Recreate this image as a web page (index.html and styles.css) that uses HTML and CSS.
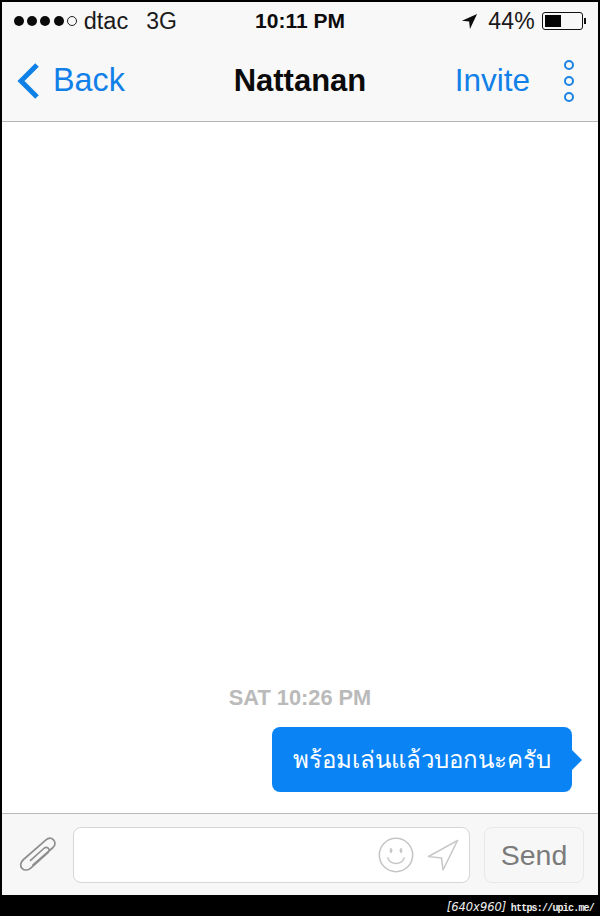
FILE: index.html
```html
<!DOCTYPE html>
<html lang="th">
<head>
<meta charset="utf-8">
<title>Nattanan</title>
<link rel="stylesheet" href="styles.css">
</head>
<body>
<div class="phone">
  <header class="top">
    <div class="status">
      <div class="status-left">
        <span class="signal"><i class="dot"></i><i class="dot"></i><i class="dot"></i><i class="dot"></i><i class="dot empty"></i></span>
        <span class="carrier">dtac</span>
        <span class="net">3G</span>
      </div>
      <div class="clock">10:11 PM</div>
      <div class="status-right">
        <svg class="loc" width="17" height="17" viewBox="0 0 18 18"><path d="M17 1 1 8.2l7.6.9.9 7.9z" fill="#0c0c0c"/></svg>
        <span class="pct">44%</span>
        <span class="battery"><span class="level"></span></span><span class="nub"></span>
      </div>
    </div>
    <nav class="nav">
      <a class="back">
        <svg width="26" height="38" viewBox="0 0 26 38"><path d="M23 3 7 19l16 16" fill="none" stroke="#0f80e6" stroke-width="5"/></svg>
        <span>Back</span>
      </a>
      <h1 class="title">Nattanan</h1>
      <a class="invite">Invite</a>
      <svg class="more" width="14" height="44" viewBox="0 0 14 44"><g fill="none" stroke="#1a84e2" stroke-width="2"><circle cx="7" cy="6" r="4"/><circle cx="7" cy="22" r="4"/><circle cx="7" cy="38" r="4"/></g></svg>
    </nav>
  </header>
  <main class="thread">
    <div class="stamp">SAT 10:26 PM</div>
    <div class="bubble">พร้อมเล่นแล้วบอกนะครับ</div>
  </main>
  <footer class="composer">
    <svg class="clip" width="42" height="40" viewBox="0 0 42 40"><path d="M16.500 30.500 37 12.500c2.800-2.600 2.300-5.800.5-7.600-2-2-5-2.200-7.500 0L7.500 24.500c-3.300 3-3.700 6.500-1.500 8.800 2.300 2.500 6 2.200 9-.5l17-15.300c1.600-1.500 1.400-3.300.2-4.300-1.200-1.100-3-1-4.400.3L14 25.800" fill="none" stroke="#8e8e8e" stroke-width="1.700"/></svg>
    <div class="field">
      <svg width="36" height="36" viewBox="0 0 36 36"><g fill="none" stroke="#c6c6c6" stroke-width="1.600"><circle cx="18" cy="18" r="16.700"/><path d="M9.500 20.500c2 4.500 5.300 6 8.500 6s6.500-1.500 8.500-6"/></g><ellipse cx="13" cy="13.500" rx="1.400" ry="2.600" fill="#c6c6c6"/><ellipse cx="23" cy="13.500" rx="1.400" ry="2.600" fill="#c6c6c6"/></svg>
      <svg width="32" height="32" viewBox="0 0 32 32"><path d="M30.500 1.500 1.500 17.500l13 1.500 1.500 12z" fill="none" stroke="#c9c9c9" stroke-width="1.600" stroke-linejoin="round"/></svg>
    </div>
    <div class="send">Send</div>
  </footer>
  <div class="watermark"><span class="size">[640x960]</span> <span class="url">https://upic.me/</span></div>
</div>
</body>
</html>
```
FILE: styles.css
```css
* { box-sizing: border-box; }
html, body { margin: 0; padding: 0; background: #000; }
body { width: 600px; height: 916px; overflow: hidden; font-family: "Liberation Sans", Arial, sans-serif; }
.phone { width: 600px; height: 916px; padding: 2px 2px 0; display: flex; flex-direction: column; }
.top { height: 120px; flex: none; background: #f8f8f8; border-bottom: 1px solid #b4b4b4; display: flex; flex-direction: column; }
.status { height: 38px; flex: none; display: grid; grid-template-columns: 1fr auto 1fr; align-items: center; padding: 0 12px; color: #1a1a1a; font-size: 22.500px; }
.status-left { display: flex; align-items: center; }
.signal { display: flex; gap: 3.200px; margin-right: 7px; }
.dot { width: 10px; height: 10px; border-radius: 50%; background: #0a0a0a; display: block; }
.dot.empty { background: none; border: 1px solid #222; }
.carrier { margin-right: 18px; font-size: 23.500px; }
.net { font-size: 23px; }
.clock { font-weight: 700; font-size: 21px; color: #0c0c0c; }
.status-right { display: flex; align-items: center; justify-content: flex-end; }
.loc { margin-right: 10px; }
.pct { margin-right: 7px; font-size: 23px; letter-spacing: .2px; }
.battery { width: 41px; height: 18px; border: 1px solid #111; border-radius: 3px; padding: 2px; display: block; background: #f8f8f8; }
.level { display: block; width: 16px; height: 12px; background: #050505; }
.nub { width: 2px; height: 6px; background: #111; margin-left: 1px; }
.nav { flex: 1; display: flex; align-items: center; position: relative; padding: 0 22px 0 12px; color: #1180e8; font-size: 32px; }
.back { display: flex; align-items: center; gap: 13px; }
.back span { font-size: 32.300px; }
.title { position: absolute; left: 0; right: 0; margin: 0; text-align: center; color: #0b0b0b; font-size: 31px; font-weight: 700; pointer-events: none; }
.invite { margin-left: auto; margin-right: 32px; font-size: 31.500px; }
.more { display: block; }
.thread { flex: 1; background: #fff; display: flex; flex-direction: column; justify-content: flex-end; padding-bottom: 21px; }
.stamp { text-align: center; color: #bababa; font-size: 21.800px; font-weight: 700; margin-bottom: 16px; }
.bubble { position: relative; align-self: flex-end; margin-right: 26px; width: 300px; height: 65px; background: #0a84f5; border-radius: 8px; color: #fff; font-family: "Noto Sans", "Liberation Sans", "DejaVu Sans", sans-serif; font-size: 24px; display: flex; align-items: center; justify-content: center; }
.bubble::after { content: ""; position: absolute; right: -10px; top: 23px; border-left: 10px solid #0a84f5; border-top: 10px solid transparent; border-bottom: 10px solid transparent; }
.composer { height: 82px; flex: none; background: #f7f7f7; border-top: 1px solid #b8b8b8; display: flex; align-items: center; padding: 0 14px; }
.clip { flex: none; margin-right: 15px; }
.field { width: 397px; height: 56px; background: #fff; border: 1px solid #d6d6d6; border-radius: 8px; display: flex; align-items: center; justify-content: flex-end; gap: 13px; padding-right: 10px; }
.send { width: 100px; height: 56px; margin-left: 14px; border: 1px solid #e8e8e8; border-radius: 8px; color: #7b7b7b; font-size: 28.500px; padding-top: 2px; display: flex; align-items: center; justify-content: center; }
.watermark { height: 21px; flex: none; background: #000; color: #eee; text-align: right; line-height: 21px; padding-right: 4px; }
.size { font-family: "DejaVu Sans", sans-serif; font-size: 11.500px; font-style: italic; }
.url { font-family: "Liberation Mono", monospace; font-weight: 700; font-size: 10px; letter-spacing: -.800px; }
```
